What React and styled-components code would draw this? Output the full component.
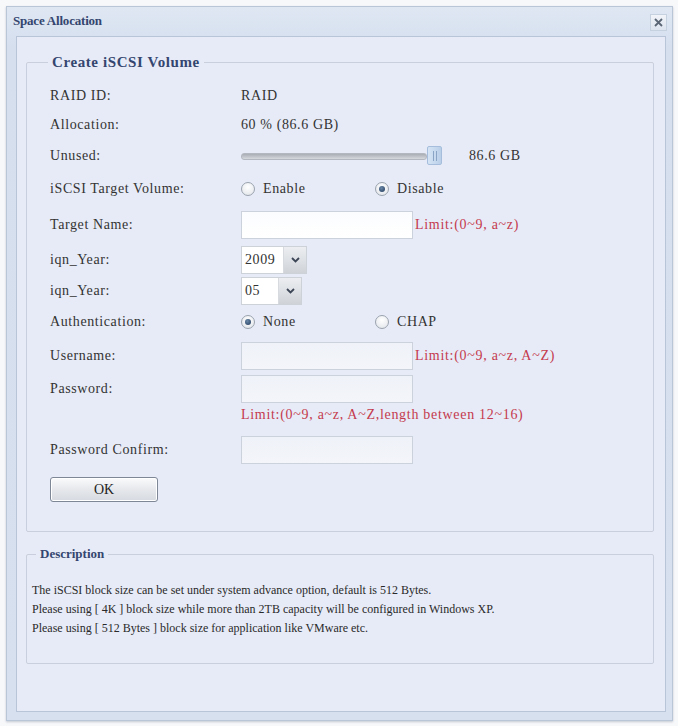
import React from 'react';
import styled, { createGlobalStyle } from 'styled-components';

const serif = '"Liberation Serif", "Times New Roman", serif';

const GlobalStyle = createGlobalStyle`
  html, body {
    margin: 0;
    padding: 0;
    background: #f7f8fa;
  }
  body {
    font-family: ${serif};
  }
`;

const Window = styled.div`
  margin: 6px 5px 5px 6px;
  width: 667px;
  height: 715px;
  box-sizing: border-box;
  border: 1px solid #b9c6d8;
  background: linear-gradient(#dfe7f3, #d5dfee 40px, #d7e0ee);
  padding: 0 6px 8px 9px;
  display: flex;
  flex-direction: column;
  box-shadow: 0 1px 2px rgba(120, 130, 150, 0.4);
  font-family: ${serif};
  color: #2b2b2b;
`;

const TitleBar = styled.div`
  height: 29px;
  display: flex;
  align-items: center;
  justify-content: space-between;
`;

const Title = styled.span`
  font-weight: bold;
  font-size: 13px;
  letter-spacing: -0.2px;
  color: #34466f;
  margin-left: -3px;
  margin-top: -2px;
`;

const CloseBox = styled.div`
  width: 15px;
  height: 15px;
  border: 1px solid #c6d1e0;
  background: linear-gradient(#f1f4f9, #dde4ee);
  display: flex;
  align-items: center;
  justify-content: center;
  margin-right: -1px;
  margin-top: 2px;
`;

const Panel = styled.div`
  flex: 1;
  border: 1px solid #b8c5d8;
  background: #e7ebf7;
  padding: 17px 11px 0 9px;
  display: flex;
  flex-direction: column;
  gap: 14px;
`;

const Fieldset = styled.fieldset`
  margin: 0;
  border: 1px solid #c9cfdc;
  border-radius: 2px;
  padding: ${(p) => p.$pad};
  height: ${(p) => p.$h}px;
  box-sizing: border-box;
  min-width: 0;
`;

const Legend = styled.legend`
  font-weight: bold;
  font-size: ${(p) => p.$size}px;
  letter-spacing: ${(p) => p.$ls}px;
  color: #34466f;
  padding: 0 4px;
  margin-left: ${(p) => p.$ml}px;
`;

const Row = styled.div`
  display: grid;
  grid-template-columns: 191px 1fr;
  align-items: center;
  height: ${(p) => p.$h}px;
  font-size: 14px;
  letter-spacing: 0.6px;
`;

const Label = styled.span`
  color: #333;
`;

const Value = styled.div`
  display: flex;
  align-items: center;
  color: #333;
`;

const Track = styled.div`
  position: relative;
  width: 184px;
  height: 5px;
  border-radius: 3px;
  background: linear-gradient(#a9adb4, #d6d9de);
  border: 1px solid #b3b7bf;
  margin-right: 42px;
`;

const Thumb = styled.div`
  position: absolute;
  right: -16px;
  top: -8px;
  width: 15px;
  height: 19px;
  border: 1px solid #a6bedb;
  border-radius: 2px;
  background: linear-gradient(90deg, #d5e4f5, #b9cfe8);
  display: flex;
  justify-content: center;
  gap: 2px;
  padding-top: 4px;
  box-sizing: border-box;
  &::before, &::after {
    content: '';
    width: 1px;
    height: 10px;
    background: #8aa4c6;
  }
`;

const RadioWrap = styled.label`
  display: flex;
  align-items: center;
  gap: 8px;
  width: ${(p) => p.$w}px;
`;

const RadioDot = styled.span`
  width: 12px;
  height: 12px;
  border-radius: 50%;
  border: 1px solid #9aa3ae;
  background: radial-gradient(circle at 50% 35%, #ffffff, #dfe3e8);
  display: flex;
  align-items: center;
  justify-content: center;
  &::after {
    content: '';
    display: ${(p) => (p.$on ? 'block' : 'none')};
    width: 6px;
    height: 6px;
    border-radius: 50%;
    background: radial-gradient(circle at 40% 35%, #6a87a8, #213a5a);
  }
`;

const TextBox = styled.div`
  width: 172px;
  height: 28px;
  box-sizing: border-box;
  border: 1px solid #ccd2dc;
  background: ${(p) => (p.$dim ? 'linear-gradient(#eff2f8, #f3f5fa)' : 'linear-gradient(#fbfcfe, #ffffff)')};
`;

const Limit = styled.span`
  color: #c43a4e;
  font-size: 14px;
  letter-spacing: 0.7px;
  margin-left: ${(p) => p.$ml ?? 2}px;
`;

const Select = styled.div`
  display: flex;
  height: 28px;
  box-sizing: border-box;
  border: 1px solid #cdd2d9;
  background: #fff;
  width: ${(p) => p.$w}px;
`;

const SelectText = styled.span`
  flex: 1;
  display: flex;
  align-items: center;
  padding-left: 3px;
`;

const SelectBtn = styled.span`
  width: 22px;
  display: flex;
  align-items: center;
  justify-content: center;
  background: linear-gradient(#eceef1, #cfd3d8);
  border-left: 1px solid #d7dadf;
`;

const OkButton = styled.button`
  width: 108px;
  height: 25px;
  margin-top: 4px;
  font-family: ${serif};
  font-size: 14px;
  color: #222;
  border: 1px solid #7d8796;
  border-radius: 3px;
  background: linear-gradient(#fbfbfc, #e6e8ec 50%, #d6dae0);
  box-shadow: inset 0 0 0 1px #ffffff;
`;

const DescText = styled.p`
  margin: 0;
  font-size: 12px;
  line-height: 19px;
  color: #2a2a2a;
`;

const Chevron = () => (
  <svg width="9" height="6" viewBox="0 0 9 6">
    <path d="M1 1 L4.5 4.5 L8 1" fill="none" stroke="#3c4656" strokeWidth="1.8" />
  </svg>
);

const Radio = ({ on, w, children }) => (
  <RadioWrap $w={w}>
    <RadioDot $on={on} />
    {children}
  </RadioWrap>
);

export default function App() {
  return (
    <>
      <GlobalStyle />
      <Window>
        <TitleBar>
          <Title>Space Allocation</Title>
          <CloseBox>
            <svg width="9" height="9" viewBox="0 0 9 9">
              <path d="M1 1 L8 8 M8 1 L1 8" stroke="#5b6675" strokeWidth="1.8" />
            </svg>
          </CloseBox>
        </TitleBar>
        <Panel>
          <Fieldset $h={478} $pad="10px 10px 0 23px">
            <Legend $size={15} $ls={0.6} $ml={-2}>Create iSCSI Volume</Legend>
            <Row $h={30}>
              <Label>RAID ID:</Label>
              <Value>RAID</Value>
            </Row>
            <Row $h={28}>
              <Label>Allocation:</Label>
              <Value>60 % (86.6 GB)</Value>
            </Row>
            <Row $h={34}>
              <Label>Unused:</Label>
              <Value>
                <Track>
                  <Thumb />
                </Track>
                86.6 GB
              </Value>
            </Row>
            <Row $h={32}>
              <Label>iSCSI Target Volume:</Label>
              <Value>
                <Radio w={134}>Enable</Radio>
                <Radio on>Disable</Radio>
              </Value>
            </Row>
            <Row $h={40}>
              <Label>Target Name:</Label>
              <Value>
                <TextBox />
                <Limit>Limit:(0~9, a~z)</Limit>
              </Value>
            </Row>
            <Row $h={30}>
              <Label>iqn_Year:</Label>
              <Value>
                <Select $w={66}>
                  <SelectText>2009</SelectText>
                  <SelectBtn><Chevron /></SelectBtn>
                </Select>
              </Value>
            </Row>
            <Row $h={32}>
              <Label>iqn_Year:</Label>
              <Value>
                <Select $w={61}>
                  <SelectText>05</SelectText>
                  <SelectBtn><Chevron /></SelectBtn>
                </Select>
              </Value>
            </Row>
            <Row $h={30}>
              <Label>Authentication:</Label>
              <Value>
                <Radio on w={134}>None</Radio>
                <Radio>CHAP</Radio>
              </Value>
            </Row>
            <Row $h={38}>
              <Label>Username:</Label>
              <Value>
                <TextBox $dim />
                <Limit>Limit:(0~9, a~z, A~Z)</Limit>
              </Value>
            </Row>
            <Row $h={28}>
              <Label>Password:</Label>
              <Value>
                <TextBox $dim />
              </Value>
            </Row>
            <Row $h={24}>
              <span />
              <Value>
                <Limit $ml={0}>Limit:(0~9, a~z, A~Z,length between 12~16)</Limit>
              </Value>
            </Row>
            <Row $h={46}>
              <Label>Password Confirm:</Label>
              <Value>
                <TextBox $dim />
              </Value>
            </Row>
            <OkButton>OK</OkButton>
          </Fieldset>
          <Fieldset $h={118} $pad="19px 10px 0 5px">
            <Legend $size={13} $ls={0} $ml={4}>Description</Legend>
            <DescText>The iSCSI block size can be set under system advance option, default is 512 Bytes.</DescText>
            <DescText>Please using [ 4K ] block size while more than 2TB capacity will be configured in Windows XP.</DescText>
            <DescText>Please using [ 512 Bytes ] block size for application like VMware etc.</DescText>
          </Fieldset>
        </Panel>
      </Window>
    </>
  );
}
